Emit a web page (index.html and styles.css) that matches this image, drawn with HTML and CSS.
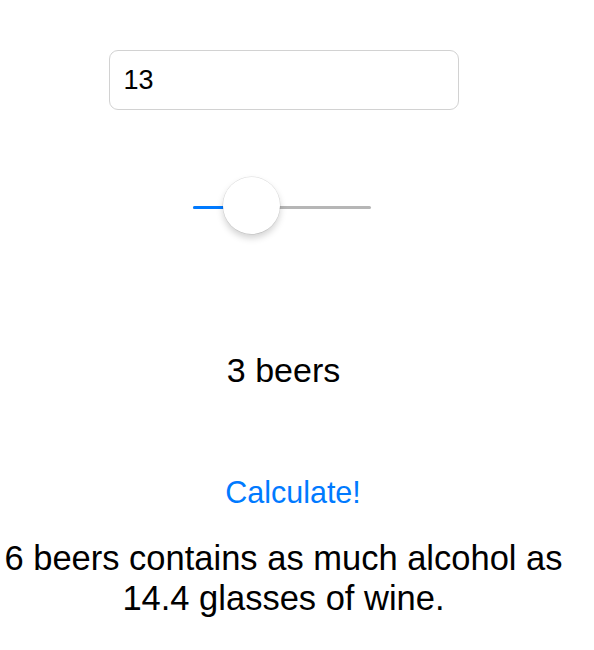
FILE: index.html
```html
<!DOCTYPE html>
<html lang="en">
<head>
<meta charset="utf-8">
<title>Beer to Wine</title>
<link rel="stylesheet" href="styles.css">
</head>
<body>
<main class="screen">
  <div class="field">13</div>
  <div class="slider">
    <div class="track">
      <div class="fill" style="width: 30px"></div>
    </div>
    <div class="thumb" style="left: 30px"></div>
  </div>
  <div class="count">3 beers</div>
  <button class="calc" type="button">Calculate!</button>
  <p class="result">6 beers contains as much alcohol as<br>14.4 glasses of wine.</p>
</main>
</body>
</html>
```
FILE: styles.css
```css
html, body {
  margin: 0;
  padding: 0;
  background: #ffffff;
}

body {
  font-family: "Liberation Sans", Helvetica, Arial, sans-serif;
  color: #000000;
}

.screen {
  width: 567px;
  display: flex;
  flex-direction: column;
  align-items: center;
}

.field {
  box-sizing: border-box;
  margin-top: 50px;
  width: 350px;
  height: 60px;
  border: 1px solid #d2d2d2;
  border-radius: 9px;
  padding-left: 14px;
  font-size: 27px;
  line-height: 58px;
}

.slider {
  position: relative;
  margin: 67px 3px 0 0;
  width: 178px;
  height: 57px;
}

.track {
  margin-top: 29px;
  height: 3px;
  border-radius: 2px;
  background: #b6b6b6;
  display: flex;
}

.fill {
  height: 3px;
  border-radius: 2px 0 0 2px;
  background: #007aff;
}

.thumb {
  position: absolute;
  top: 0;
  width: 57px;
  height: 57px;
  border-radius: 50%;
  background: #ffffff;
  box-shadow: 0 0 0 0.5px rgba(0, 0, 0, 0.12), 0 4px 7px rgba(0, 0, 0, 0.18);
}

.count {
  margin-top: 116px;
  font-size: 34px;
  line-height: 40px;
}

.calc {
  margin: 82px 0 0 0;
  padding: 0 0 0 19px;
  border: none;
  background: none;
  font-family: inherit;
  font-size: 30.5px;
  line-height: 40px;
  color: #007aff;
  cursor: pointer;
}

.result {
  margin: 26px 0 0 0;
  font-size: 34.5px;
  line-height: 40px;
  text-align: center;
  white-space: nowrap;
}
```
